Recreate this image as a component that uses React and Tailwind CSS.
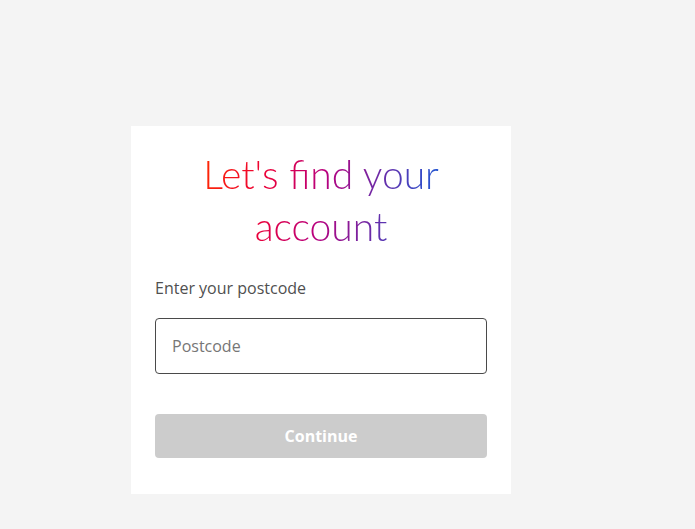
export default function App() {
  return (
    <div className="min-h-[529px] w-full bg-[#f4f4f4] pl-[131px] pt-[126px] pb-[35px]">
      <div className="w-[380px] bg-white px-6 pt-[22px] pb-9">
        <h1 className="text-center font-['Lato',sans-serif] text-[39px] font-light leading-[52px]">
          <span className="inline-block bg-[linear-gradient(100deg,#ff2a00_0%,#ec0036_26%,#b8007e_50%,#6a2ca8_72%,#1060dc_100%)] bg-clip-text text-transparent">
            Let's find your
            <br />
            account
          </span>
        </h1>
        <label
          htmlFor="postcode"
          className="mt-6 block font-['Open_Sans',sans-serif] text-base leading-6 text-[#505050]"
        >
          Enter your postcode
        </label>
        <input
          id="postcode"
          type="text"
          placeholder="Postcode"
          className="mt-[18px] block h-14 w-full rounded border border-[#4a4a4a] bg-white px-4 font-['Open_Sans',sans-serif] text-base text-[#4a4a4a] outline-none placeholder:text-[#767676]"
        />
        <button
          type="button"
          disabled
          className="mt-10 block h-11 w-full rounded bg-[#cccccc] font-['Open_Sans',sans-serif] text-base font-bold text-white"
        >
          Continue
        </button>
      </div>
    </div>
  );
}
